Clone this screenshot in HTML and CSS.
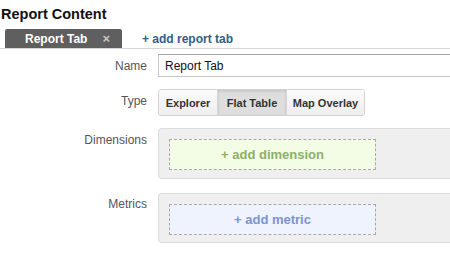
FILE: index.html
```html
<!DOCTYPE html>
<html lang="en">
<head>
    <meta charset="UTF-8">
    <title>Report Content</title>
    <link rel="stylesheet" href="styles.css">
</head>
<body>

<h1 class="title">Report Content</h1>

<div class="tabs">
    <div class="tab">Report Tab <span class="close">&times;</span></div>
    <a class="add-tab">+ add report tab</a>
</div>

<div class="form">
    <div class="row row-name">
        <div class="label">Name</div>
        <input class="name-input" type="text" value="Report Tab">
    </div>
    <div class="row row-type">
        <div class="label">Type</div>
        <div class="btn-group">
            <div class="btn btn-explorer">Explorer</div>
            <div class="btn btn-flat active">Flat Table</div>
            <div class="btn btn-map">Map Overlay</div>
        </div>
    </div>
    <div class="row row-dims">
        <div class="label">Dimensions</div>
        <div class="well">
            <div class="drop drop-green">+ add dimension</div>
        </div>
    </div>
    <div class="row row-metrics">
        <div class="label label-metrics">Metrics</div>
        <div class="well">
            <div class="drop drop-blue">+ add metric</div>
        </div>
    </div>
</div>

</body>
</html>
```

FILE: styles.css
```css
body {
    margin: 0;
    font-family: "Liberation Sans", Arial, sans-serif;
    overflow: hidden;
    background-color: #fff;
}
.title {
    margin: 0;
    padding: 6px 0 0 1px;
    font-size: 14.5px;
    line-height: 16px;
    font-weight: bold;
    color: #111;
}
.tabs {
    display: flex;
    align-items: flex-end;
    margin-top: 7px;
    padding-left: 5px;
    height: 19px;
    border-bottom: 1px solid #d6d6d6;
}
.tab {
    display: flex;
    align-items: center;
    box-sizing: border-box;
    width: 117px;
    height: 19px;
    padding-left: 20px;
    background-color: #5f5f5f;
    border-radius: 2px 2px 0 0;
    color: #fff;
    font-size: 12px;
    font-weight: bold;
}
.close {
    margin-left: 15px;
    color: #c8c8c8;
    font-size: 13px;
}
.add-tab {
    margin-left: 20px;
    align-self: center;
    color: #2f5e8a;
    font-size: 12px;
    font-weight: bold;
}
.form {
    margin-top: 5px;
}
.row {
    display: grid;
    grid-template-columns: 147px 1fr;
    column-gap: 11px;
    align-items: start;
}
.row-type {
    margin-top: 12px;
}
.row-dims {
    margin-top: 12px;
}
.row-metrics {
    margin-top: 14px;
}
.label {
    text-align: right;
    color: #555;
    font-size: 12px;
    line-height: 16px;
    padding-top: 4px;
}
.label-metrics {
    padding-top: 3px;
}
.name-input {
    box-sizing: border-box;
    width: 100%;
    height: 23px;
    margin: 0;
    padding: 0 6px;
    border: 1px solid #c6c6c6;
    border-top-color: #a8a8a8;
    border-right: none;
    font-family: "Liberation Sans", Arial, sans-serif;
    font-size: 12px;
    color: #111;
}
.btn-group {
    display: flex;
    width: max-content;
    height: 27px;
    box-sizing: border-box;
    border: 1px solid #d2d2d2;
    border-radius: 3px;
    overflow: hidden;
}
.btn {
    display: flex;
    align-items: center;
    justify-content: center;
    background: linear-gradient(#fbfbfb, #eeeeee);
    color: #333;
    font-size: 11px;
    font-weight: bold;
}
.btn + .btn {
    border-left: 1px solid #d6d6d6;
}
.btn-explorer {
    width: 58px;
}
.btn-flat {
    width: 68px;
}
.btn-map {
    width: 77px;
}
.btn.active {
    background: #dedede;
    box-shadow: inset 0 1px 3px rgba(0, 0, 0, 0.15);
}
.well {
    box-sizing: border-box;
    height: 51px;
    padding: 10px 0 0 10px;
    background-color: #efefef;
    border: 1px solid #dcdcdc;
    border-right: none;
    border-radius: 4px 0 0 4px;
}
.row-metrics .well {
    height: 50px;
}
.drop {
    box-sizing: border-box;
    width: 207px;
    height: 31px;
    border: 1px dashed #a9a9a9;
    display: flex;
    align-items: center;
    justify-content: center;
    font-size: 13px;
    font-weight: bold;
}
.drop-green {
    background-color: #f3fde6;
    color: #8fae6d;
}
.drop-blue {
    background-color: #eef3fd;
    color: #7c94d0;
}
```
